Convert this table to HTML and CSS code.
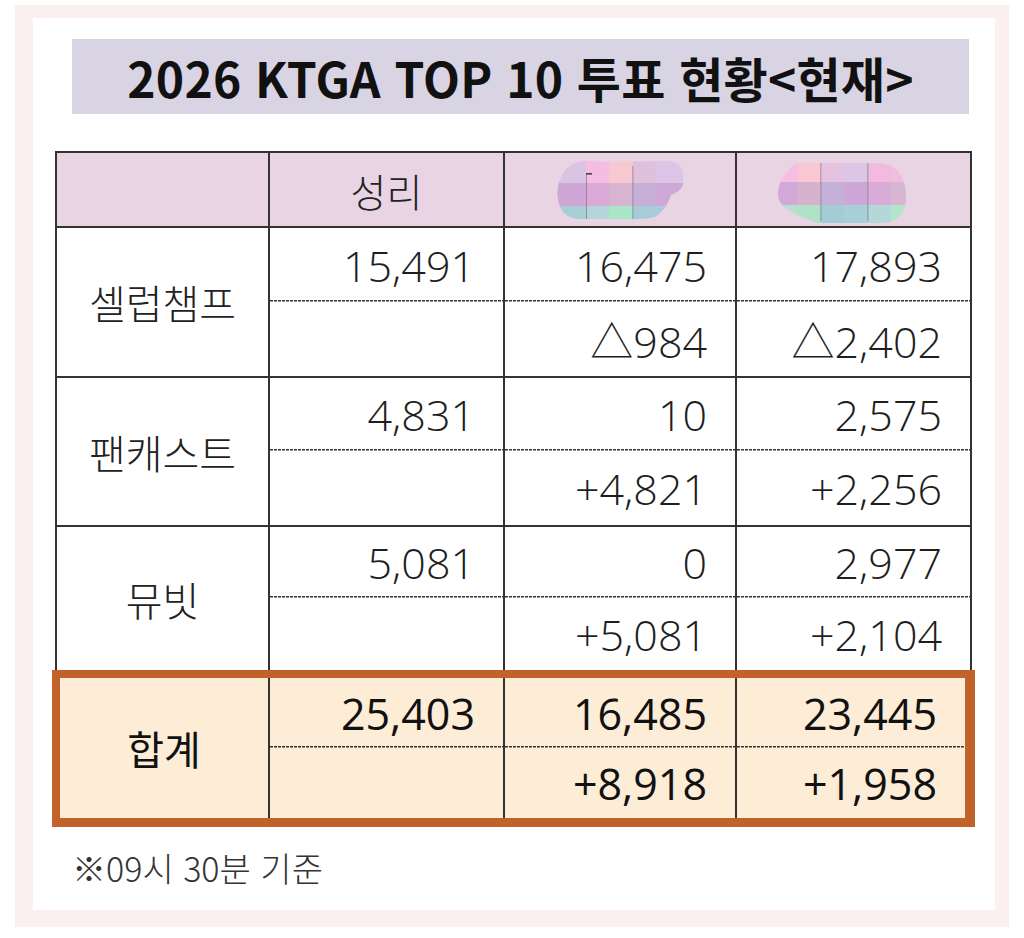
FILE: index.html
```html
<!DOCTYPE html>
<html lang="ko">
<head>
<meta charset="utf-8">
<title>2026 KTGA TOP 10 투표 현황</title>
<link rel="stylesheet" href="styles.css">
</head>
<body>
<div class="frame">
  <div class="card">
    <div class="banner"><h1 class="title">2026 KTGA TOP 10 투표 현황&lt;현재&gt;</h1></div>

    <div class="tbl">
      <div class="row head">
        <div class="cell"></div>
        <div class="cell hd">성리</div>
        <div class="cell hd">
          <svg class="blob" width="130" height="62" viewBox="0 0 130 62">
            <defs>
              <clipPath id="b1"><path d="M20 4 Q30 0 45 3 L110 2 Q126 2 128 14 L128 26 Q126 32 116 36 Q112 50 100 58 Q90 61 60 60 L22 60 Q8 58 4 45 Q0 30 6 18 Q10 8 20 4 Z"/></clipPath>
            </defs>
            <g clip-path="url(#b1)">
              <rect x="0" y="0" width="31" height="24" fill="#dac4e3"/>
              <rect x="31" y="0" width="23" height="24" fill="#f5bde1"/>
              <rect x="54" y="0" width="24" height="24" fill="#f8c8d2"/>
              <rect x="78" y="0" width="23" height="24" fill="#e0c1dd"/>
              <rect x="101" y="0" width="29" height="24" fill="#dcc5e7"/>
              <rect x="0" y="24" width="31" height="23" fill="#cfa6d6"/>
              <rect x="31" y="24" width="23" height="23" fill="#dba9d8"/>
              <rect x="54" y="24" width="24" height="23" fill="#d9b3d2"/>
              <rect x="78" y="24" width="23" height="23" fill="#c6b0d8"/>
              <rect x="101" y="24" width="29" height="23" fill="#cfa8da"/>
              <rect x="0" y="47" width="31" height="15" fill="#a8ced6"/>
              <rect x="31" y="47" width="23" height="15" fill="#b3d6da"/>
              <rect x="54" y="47" width="24" height="15" fill="#a8e6c6"/>
              <rect x="78" y="47" width="23" height="15" fill="#a6ccd8"/>
              <rect x="101" y="47" width="29" height="15" fill="#a8cdd6"/>
              <rect x="31" y="14" width="0.8" height="48" fill="#8a7d8e"/>
              <rect x="31" y="14" width="6" height="1.6" fill="#444"/>
              <rect x="77.5" y="7" width="0.8" height="53" fill="#8a7d8e"/>
            </g>
          </svg>
        </div>
        <div class="cell hd">
          <svg class="blob blob2" width="130" height="62" viewBox="0 0 130 62">
            <defs>
              <clipPath id="b2"><path d="M10 10 Q14 1 26 1 L100 1 Q118 1 124 14 Q130 24 129 38 Q128 52 118 58 Q110 62 98 61 L40 61 Q20 54 9 46 Q0 40 1 30 Q2 18 10 10 Z"/></clipPath>
            </defs>
            <g clip-path="url(#b2)">
              <rect x="0" y="0" width="21" height="20" fill="#f6bfe2"/>
              <rect x="21" y="0" width="23" height="20" fill="#f8c7d3"/>
              <rect x="44" y="0" width="23" height="20" fill="#e4c3e0"/>
              <rect x="67" y="0" width="24" height="20" fill="#dcc6e8"/>
              <rect x="91" y="0" width="23" height="20" fill="#f3bae0"/>
              <rect x="114" y="0" width="16" height="20" fill="#f0bde0"/>
              <rect x="0" y="20" width="21" height="23" fill="#d2a8d6"/>
              <rect x="21" y="20" width="23" height="23" fill="#d5b3cf"/>
              <rect x="44" y="20" width="23" height="23" fill="#c4b1d7"/>
              <rect x="67" y="20" width="24" height="23" fill="#cca7d7"/>
              <rect x="91" y="20" width="23" height="23" fill="#d9acd8"/>
              <rect x="114" y="20" width="16" height="23" fill="#d6b6d2"/>
              <rect x="0" y="43" width="21" height="19" fill="#b2e3ca"/>
              <rect x="21" y="43" width="23" height="19" fill="#b0e2c8"/>
              <rect x="44" y="43" width="23" height="19" fill="#a4ccd6"/>
              <rect x="67" y="43" width="24" height="19" fill="#a8d0d8"/>
              <rect x="91" y="43" width="23" height="19" fill="#b4d8d8"/>
              <rect x="114" y="43" width="16" height="19" fill="#b3e6c8"/>
              <rect x="43.5" y="1" width="0.8" height="58" fill="#8a7d8e"/>
              <rect x="90.5" y="1" width="0.8" height="58" fill="#8a7d8e"/>
            </g>
          </svg>
        </div>
      </div>

      <div class="row data r1">
        <div class="cell label">셀럽챔프</div>
        <div class="cell vals"><div class="half top">15,491</div><div class="half"></div></div>
        <div class="cell vals"><div class="half top">16,475</div><div class="half">△984</div></div>
        <div class="cell vals"><div class="half top">17,893</div><div class="half">△2,402</div></div>
      </div>

      <div class="row data r2">
        <div class="cell label">팬캐스트</div>
        <div class="cell vals"><div class="half top">4,831</div><div class="half"></div></div>
        <div class="cell vals"><div class="half top">10</div><div class="half">+4,821</div></div>
        <div class="cell vals"><div class="half top">2,575</div><div class="half">+2,256</div></div>
      </div>

      <div class="row data r3">
        <div class="cell label">뮤빗</div>
        <div class="cell vals"><div class="half top">5,081</div><div class="half"></div></div>
        <div class="cell vals"><div class="half top">0</div><div class="half">+5,081</div></div>
        <div class="cell vals"><div class="half top">2,977</div><div class="half">+2,104</div></div>
      </div>
    </div>

    <div class="total">
      <div class="cell label sum">합계</div>
      <div class="cell vals"><div class="half top">25,403</div><div class="half"></div></div>
      <div class="cell vals"><div class="half top">16,485</div><div class="half">+8,918</div></div>
      <div class="cell vals last"><div class="half top">23,445</div><div class="half">+1,958</div></div>
    </div>

    <p class="note">※09시 30분 기준</p>
  </div>
</div>
</body>
</html>
```

FILE: styles.css
```css
* { box-sizing: border-box; }

html, body {
  margin: 0;
  padding: 0;
  background: #ffffff;
}

body {
  font-family: "Noto Sans CJK KR", "Noto Sans", sans-serif;
  color: #222;
}

.frame {
  width: 994px;
  height: 922px;
  margin: 5px 0 0 15px;
  padding: 13px 14px 17px 18px;
  background: #fcefef;
}

.card {
  width: 962px;
  height: 892px;
  background: #ffffff;
  padding-top: 21px;
}

.banner {
  margin-left: 39px;
  width: 897px;
  height: 75px;
  background: #d9d4e4;
  display: flex;
  align-items: center;
  justify-content: center;
}

.title {
  margin: 0;
  font-family: "Noto Sans CJK KR", sans-serif;
  font-weight: 700;
  font-size: 48px;
  letter-spacing: 0.2px;
  line-height: 1;
  color: #111;
  white-space: pre;
}

.tbl {
  margin-top: 37px;
  margin-left: 22px;
  width: 917px;
  border-top: 2px solid #333;
  border-left: 2px solid #333;
}

.row {
  display: grid;
  grid-template-columns: 213px 235px 232px 235px;
}

.cell {
  border-right: 2px solid #333;
  border-bottom: 2px solid #333;
}

.head .cell {
  height: 75px;
  background: #e9d4e3;
}

.hd {
  display: flex;
  align-items: center;
  justify-content: center;
  font-size: 39px;
  font-weight: 300;
  color: #222;
}

.blob { display: block; filter: blur(0.7px); }
.blob2 { margin-right: 24px; margin-top: 6px; }

.r1 .cell { height: 150px; }
.r2 .cell { height: 149px; }
.r3 .cell { height: 143px; border-bottom: none; }

.label {
  display: flex;
  align-items: center;
  justify-content: center;
  font-size: 40px;
  font-weight: 300;
  color: #222;
}

.vals {
  display: flex;
  flex-direction: column;
}

.half {
  flex: 1;
  display: flex;
  align-items: center;
  justify-content: flex-end;
  padding-right: 28px;
  font-family: "Open Sans", "Noto Sans CJK KR", sans-serif;
  font-size: 43px;
  font-weight: 300;
  color: #1e1e1e;
}

.half.top {
  background-image: repeating-linear-gradient(90deg, #333 0 3px, transparent 3px 4px);
  background-size: 100% 1.5px;
  background-position: left bottom 1px;
  background-repeat: no-repeat;
}

.total {
  margin-left: 19px;
  width: 923px;
  height: 157px;
  border-style: solid;
  border-color: #c1622a;
  border-width: 8px 10px 9px 8px;
  background: #fdecd6;
  display: grid;
  grid-template-columns: 210px 235px 232px 228px;
}

.total .cell {
  border-bottom: none;
  height: 140px;
}

.total .cell.last { border-right: none; }

.total .half { color: #111; font-weight: 400; }

.sum { color: #111; font-weight: 400; }

.note {
  margin: 16px 0 0 39px;
  font-size: 34px;
  font-weight: 300;
  color: #333;
  line-height: 1.45;
}
```
